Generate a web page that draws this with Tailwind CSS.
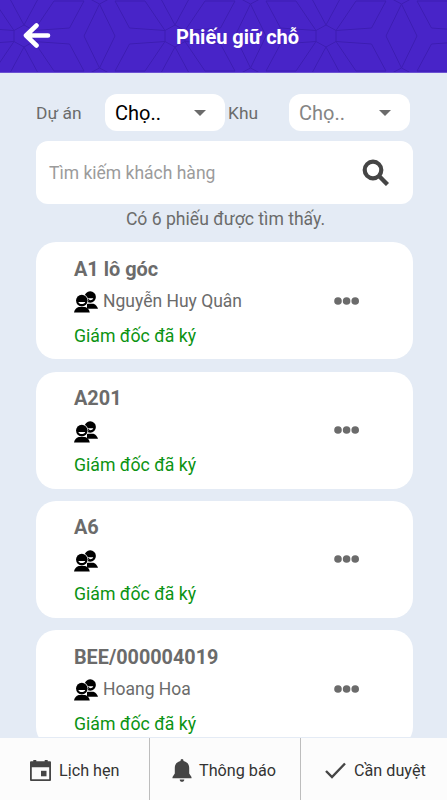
<!DOCTYPE html>
<html lang="vi">

<head>
    <meta charset="UTF-8">
    <meta name="viewport" content="width=device-width, initial-scale=1.0">
    <script src="https://cdn.jsdelivr.net/npm/@tailwindcss/browser@4"></script>
    <title>Phiếu giữ chỗ</title>
</head>

<body class="h-[800px] flex flex-col overflow-hidden bg-[#e4ebf5] font-['Roboto',sans-serif] text-[#6b6b6b]">

    <!-- Shared icons -->
    <svg class="hidden">
        <symbol id="icon-users" viewBox="0 0 24 22">
            <circle cx="16.200" cy="6" r="5.700" />
            <path d="M13.500 7.300h5.800c-.4 1.300-1.600 2-3.200 2z" fill="#fff" />
            <path d="M13 17.800v-5h6.500c2.200.9 3.900 2.700 4.500 5z" />
            <circle cx="7.800" cy="9.600" r="6.500" fill="#fff" />
            <circle cx="7.800" cy="9.600" r="5.800" />
            <path d="M4.400 10.900h6.800c-.4 1.400-1.700 2.100-3.400 2.100s-3-.7-3.400-2.100z" fill="#fff" />
            <path d="M0 21.600c.5-2.900 2.300-5 4.600-5.600h6.600c2.300.6 4.100 2.700 4.600 5.600z" />
        </symbol>
        <symbol id="icon-dots" viewBox="0 0 26 8">
            <circle cx="4" cy="4" r="3.800" />
            <circle cx="12.600" cy="4" r="3.800" />
            <circle cx="21.200" cy="4" r="3.800" />
        </symbol>
    </svg>

    <!-- Header -->
    <header class="relative h-[73px] shrink-0 bg-[#4824c8] border-b border-[#6a50d2] text-white">
        <svg class="absolute inset-0 w-full h-full" fill="none" stroke="#3c1cb2" stroke-width="1">
            <defs>
                <pattern id="star" x="24" y="0" width="151" height="72" patternUnits="userSpaceOnUse">
                    <path d="M0 25l10 5.500v11L0 47M151 25l-10 5.500v11l10 5.500" />
                    <path d="M0 25L14-1M0 47l14 26M151 25L137-1M151 47l-14 26" />
                    <path d="M10 30.500L30 1h30L45.500 28 10 30.500M10 41.500L30 71h30L45.500 44 10 41.500" />
                    <path d="M141 30.500L121 1H91l14.500 27 35.500 2.500M141 41.500L121 71H91l14.500-27 35.500-2.500" />
                    <path d="M75.500 4L60 36l15.500 32L91 36zM66-1l9.500 5L85-1M66 73l9.500-5 9.500 5" />
                </pattern>
            </defs>
            <rect width="447" height="72" fill="url(#star)" stroke="none" />
        </svg>
        <div class="relative h-full flex items-center pl-[23px]">
            <svg class="w-7 h-7" viewBox="0 0 28 28" fill="none" stroke="#fff" stroke-width="4.600" stroke-linecap="round" stroke-linejoin="round">
                <path d="M13.500 3.500L3 13.500l10.500 10M4 13.500h21" />
            </svg>
            <h1 class="ml-[125px] pt-px text-[20px] font-bold whitespace-nowrap">Phiếu giữ chỗ</h1>
        </div>
    </header>

    <!-- Main Content -->
    <main class="flex-1 min-h-0 overflow-hidden pl-9 pr-[34px] pt-[21px]">
        <!-- Filters -->
        <div class="flex items-center h-[37px] text-[17.400px]">
            <span class="w-[69px] pt-0.5">Dự án</span>
            <div class="w-[120px] h-[37px] rounded-xl bg-white flex items-center justify-between pl-[10px] pr-[19px] text-[20px] text-black">
                <span>Chọ..</span>
                <svg class="w-3 h-1.5" viewBox="0 0 12 6" fill="#6b6b6b"><path d="M0 0h12L6 6z" /></svg>
            </div>
            <span class="ml-[3px] w-[61px] pt-0.5">Khu</span>
            <div class="w-[121px] h-[37px] rounded-xl bg-white flex items-center justify-between pl-[10px] pr-[19px] text-[20px] text-[#858585]">
                <span>Chọ..</span>
                <svg class="w-3 h-1.5" viewBox="0 0 12 6" fill="#6b6b6b"><path d="M0 0h12L6 6z" /></svg>
            </div>
        </div>

        <!-- Search -->
        <div class="mt-[10px] h-[63px] rounded-xl bg-white flex items-center justify-between pl-[13px] pr-6">
            <span class="pt-0.5 text-[17.500px] text-[#9b9b9b]">Tìm kiếm khách hàng</span>
            <svg class="w-[27px] h-[27px]" viewBox="0 0 27 27" fill="none" stroke="#454545">
                <circle cx="11" cy="11" r="8.300" stroke-width="4.200" />
                <path d="M17 17l8.500 8.500" stroke-width="4.400" />
            </svg>
        </div>
        <p class="h-[38.400px] pt-[3px] pl-[2px] text-center text-[17.600px] leading-6">Có 6 phiếu được tìm thấy.</p>

        <!-- Results -->
        <div class="flex flex-col gap-[12.300px]">
            <div class="h-[117px] shrink-0 rounded-[20px] bg-white flex items-center justify-between pl-[38px] pr-[53px]">
                <div>
                    <h2 class="h-[34px] leading-[38px] text-[19.900px] font-bold">A1 lô góc</h2>
                    <div class="h-[33px] flex items-center gap-[5px] text-[17.500px]">
                        <svg class="w-6 h-[22px] mt-0.5"><use href="#icon-users" /></svg>
                        <span>Nguyễn Huy Quân</span>
                    </div>
                    <p class="h-[33px] leading-[37px] text-[17.700px] text-[#0b9312]">Giám đốc đã ký</p>
                </div>
                <svg class="w-[26px] h-2" fill="#6b6b6b"><use href="#icon-dots" /></svg>
            </div>
            <div class="h-[117px] shrink-0 rounded-[20px] bg-white flex items-center justify-between pl-[38px] pr-[53px]">
                <div>
                    <h2 class="h-[34px] leading-[38px] text-[19.900px] font-bold">A201</h2>
                    <div class="h-[33px] flex items-center">
                        <svg class="w-6 h-[22px] mt-0.5"><use href="#icon-users" /></svg>
                    </div>
                    <p class="h-[33px] leading-[37px] text-[17.700px] text-[#0b9312]">Giám đốc đã ký</p>
                </div>
                <svg class="w-[26px] h-2" fill="#6b6b6b"><use href="#icon-dots" /></svg>
            </div>
            <div class="h-[117px] shrink-0 rounded-[20px] bg-white flex items-center justify-between pl-[38px] pr-[53px]">
                <div>
                    <h2 class="h-[34px] leading-[38px] text-[19.900px] font-bold">A6</h2>
                    <div class="h-[33px] flex items-center">
                        <svg class="w-6 h-[22px] mt-0.5"><use href="#icon-users" /></svg>
                    </div>
                    <p class="h-[33px] leading-[37px] text-[17.700px] text-[#0b9312]">Giám đốc đã ký</p>
                </div>
                <svg class="w-[26px] h-2" fill="#6b6b6b"><use href="#icon-dots" /></svg>
            </div>
            <div class="h-[117px] shrink-0 rounded-[20px] bg-white flex items-center justify-between pl-[38px] pr-[53px]">
                <div>
                    <h2 class="h-[34px] leading-[38px] text-[19.800px] font-bold">BEE/000004019</h2>
                    <div class="h-[33px] flex items-center gap-[5px] text-[17.500px]">
                        <svg class="w-6 h-[22px] mt-0.5"><use href="#icon-users" /></svg>
                        <span>Hoang Hoa</span>
                    </div>
                    <p class="h-[33px] leading-[37px] text-[17.700px] text-[#0b9312]">Giám đốc đã ký</p>
                </div>
                <svg class="w-[26px] h-2" fill="#6b6b6b"><use href="#icon-dots" /></svg>
            </div>
        </div>
    </main>

    <!-- Bottom Navigation -->
    <nav class="h-[63px] shrink-0 flex bg-[#fcfcfc] border-t border-[#e4ebf5] text-[16.200px] text-[#333]">
        <a class="w-[150px] border-r border-[#bdbdbd] flex items-center pt-0.5 pl-[30px] gap-2 whitespace-nowrap">
            <svg class="w-[21px] h-[21px]" viewBox="0 0 21 21" fill="#454545">
                <path fill-rule="evenodd" d="M3.300 0h3v1.200h8.400V0h3v1.200H20a1 1 0 0 1 1 1V20a1 1 0 0 1-1 1H1a1 1 0 0 1-1-1V2.200a1 1 0 0 1 1-1h2.300zM1.800 7.300v12h17.400v-12z" />
                <path d="M11 10.800h5.500v5.500H11z" />
            </svg>
            <span class="pt-[3px]">Lịch hẹn</span>
        </a>
        <a class="w-[151px] border-r border-[#bdbdbd] flex items-center pt-0.5 pl-[22px] gap-[7px] whitespace-nowrap">
            <svg class="w-5 h-[23px]" viewBox="0 0 20 23" fill="#454545">
                <path d="M10 0c1 0 1.500.8 1.500 1.900 3.600.8 5.700 3.400 5.700 6.800v5.800L19.500 18v1.300H.5V18l2.300-3.500V8.700c0-3.400 2.100-6 5.700-6.800C8.500.8 9 0 10 0zM7.700 20.500h4.600c0 1.400-1 2.300-2.300 2.300s-2.300-.9-2.300-2.300z" />
            </svg>
            <span class="pt-[3px]">Thông báo</span>
        </a>
        <a class="flex-1 flex items-center pt-0.5 pl-6 gap-2 whitespace-nowrap">
            <svg class="w-[21px] h-[17px]" viewBox="0 0 21 17" fill="none" stroke="#454545" stroke-width="2.400">
                <path d="M1 9l6 6L20 1.500" />
            </svg>
            <span class="pt-[3px]">Cần duyệt</span>
        </a>
    </nav>

</body>

</html>
